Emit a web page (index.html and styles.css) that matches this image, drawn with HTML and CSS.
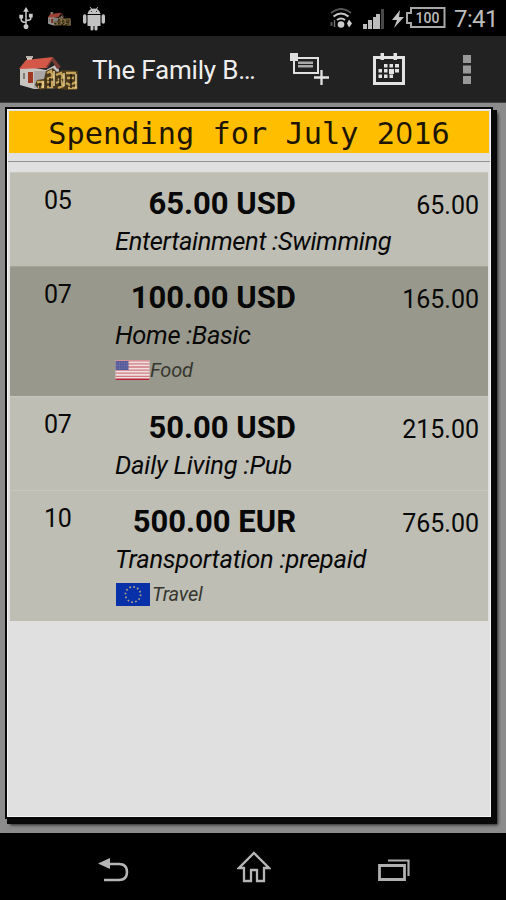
FILE: index.html
```html
<!DOCTYPE html>
<html lang="en">
<head>
<meta charset="utf-8">
<title>The Family Budget</title>
<link rel="stylesheet" href="styles.css">
</head>
<body>
<svg class="defs" width="0" height="0" aria-hidden="true">
  <symbol id="house" viewBox="0 0 62 38">
    <path d="M2 13 11 12 28 15 39 9 42 19 40 33 16 34 2 30Z" fill="#c8c4c0"/>
    <path d="M16 16h24v17H16Z" fill="#aaa6a6"/>
    <path d="M9 9V1h5v8Z" fill="#d8d2cc"/>
    <path d="M8 1h7v2H8Z" fill="#b8afa9"/>
    <path d="M8 5 35 2 29 13 1 14Z" fill="#d45848"/>
    <path d="M35 2 43 12 39 14 34 6 29 14 28 12Z" fill="#783b35"/>
    <path d="M10 17h5v11h-5Z" fill="#9f3822"/>
    <path d="M5 18h2v6H5Z" fill="#817b79"/>
    <path d="M17 30 19 25 26 24 28 16 35 13 39 17 44 15 50 15 60 16 60 34 48 35 34 33 22 35Z" fill="#49381b"/>
    <g fill="none" stroke="#c5a35b" stroke-width="2.4">
      <path d="M19 27h6v5h-5M29 18l4-2 2 6-6 2M29 27h5v5h-5M38 20l5-2 2 4-5 3M38 28l5-2 2 5-5 2M48 18h10M49 23h7M48 28l4 2 6-3M50 33h9"/>
    </g>
    <path d="M25 26v7M36 16v15M46 18v13M58 19v14" stroke="#efd99c" stroke-width="1.4"/>
    <path d="M22 28v5M32 23v9M42 22v9M53 19v14" stroke="#21190e" stroke-width="1.4"/>
  </symbol>
</svg>
<header class="status">
  <svg class="usb" viewBox="0 0 14 24"><path d="M7 3v17M2 10v3q0 3 5 3M12 9v3q0 2-5 2" fill="none" stroke="#c9c9c9" stroke-width="1.6"/><path d="M7 0 10 5H4ZM0 8h4v4H0Zm10-1h4v4h-4Z" fill="#c9c9c9"/><circle cx="7" cy="20.5" r="2.6" fill="#c9c9c9"/></svg>
  <svg class="mini-house"><use href="#house"/></svg>
  <svg class="android" viewBox="0 0 22 24" fill="#c2c2c2"><path d="M4.5 7Q5 3.5 8 2L6.7.3 7.5 0 9 1.8q2-.6 4 0L14.5 0l.8.3L14 2q3 1.5 3.5 5ZM4.500 8h13v11h-3v3a1.500 1.500 0 0 1-3 0v-3h-1v3a1.500 1.500 0 0 1-3 0v-3h-3ZM0 9a1.600 1.600 0 0 1 3.400 0v6A1.600 1.600 0 0 1 0 15Zm18.600 0A1.600 1.600 0 0 1 22 9v6a1.600 1.600 0 0 1-3.400 0Z"/><path d="M8 4h1v1H8Zm5 0h1v1h-1Z" fill="#333"/></svg>
  <span class="spacer"></span>
  <svg class="wifi" viewBox="0 0 22 21" fill="none"><path d="M1 5q10-8 20 0" stroke="#555" stroke-width="2"/><path d="M3.500 8.500q7.500-6 15 0M7 12q4-3 8 0" stroke="#c8c8c8" stroke-width="2"/><circle cx="11" cy="16.500" r="3.300" fill="#ccc"/><path d="M1.500 14v4" stroke="#555" stroke-width="2"/><path d="M4.500 12v7" stroke="#777" stroke-width="1.400"/><path d="m19 11.500 3 4-3 4-2-4Z" fill="#ccc"/></svg>
  <svg class="signal" viewBox="0 0 21 20"><path d="M0 15h4v5H0Zm5-4h4v9H5Zm5-3h3v12h-3Zm3-3h4v15h-4Z" fill="#bcbcbc"/><path d="M18 0h3v20h-3Z" fill="#484848"/></svg>
  <svg class="bolt" viewBox="0 0 12 18"><path d="M8 0 0 10h5L2 18l10-11H7Z" fill="#c4c4c4"/></svg>
  <span class="battery"><svg viewBox="0 0 40 21"><path d="M5 1h33.500v19H5v-4H1V6h4Z" fill="none" stroke="#a8a8a8" stroke-width="2"/></svg><b>100</b></span>
  <span class="clock">7:41</span>
</header>
<nav class="actionbar">
  <svg class="logo"><use href="#house"/></svg>
  <h1>The Family B…</h1>
  <svg class="add" viewBox="0 0 40 34"><path d="M5 5h24v15H5Z" fill="none" stroke="#e1e1e1" stroke-width="2"/><path d="M1 0h8v8H1Z" fill="#dedede"/><path d="M9 8.500h15v2.500H9Zm0 3.500h15v2.500H9Z" fill="#aaa"/><path d="M32.500 17v15M25 24.500h15" stroke="#222" stroke-width="5"/><path d="M32.500 17v15M25 24.500h15" stroke="#e3e3e3" stroke-width="2.300"/></svg>
  <svg class="calendar" viewBox="0 0 32 33"><path d="M1.500 4.500h29v26h-29Z" fill="none" stroke="#e3e3e3" stroke-width="3"/><path d="M7.500 0H11v7H7.500ZM20.500 0H24v7h-3.500Z" fill="#e3e3e3"/><path d="M11 11h3.500v3.500H11Zm5.500 0H20v3.500h-3.500Zm5.500 0h4v3.500h-4ZM5.500 16H9v3.500H5.500Zm5.500 0h3.500v3.500H11Zm5 0h5v5h-5Zm6 0h4v3.500h-4ZM5.500 21.500H9V25H5.500Zm5.500 0h3.500V25H11Zm5.500 0H20V25h-3.500Z" fill="#e3e3e3"/></svg>
  <svg class="more" viewBox="0 0 8 29"><path d="M0 0h8v8H0Zm0 10.500h8v8H0ZM0 21h8v8H0Z" fill="#999"/></svg>
</nav>
<main>
  <section class="paper">
    <h2>Spending for July 2<span>0</span>16</h2>
    <div class="rule"></div>
    <ul>
      <li><span class="day">05</span><div class="entry"><strong>65.00 USD</strong><em class="swim">Entertainment :Swimming</em></div><span class="total">65.00</span></li>
      <li class="dark tall"><span class="day">07</span><div class="entry"><strong>100.00 USD</strong><em class="basic">Home :Basic</em><div class="tag"><svg class="us" viewBox="0 0 34 20"><path d="M0 0h34v20H0Z" fill="#eee1df"/><path d="M0 .8h34M0 3.900h34M0 7h34M0 10.100h34M0 13.200h34M0 16.300h34" stroke="#d07a80" stroke-width="1.300"/><path d="M0 18.500h34V20H0Z" fill="#b52035"/><path d="M0 1h13v9H0Z" fill="#565b99"/><path d="M1 3h11M1 5.500h11M1 8h11" stroke="#8589b5" stroke-dasharray="1 1.500"/></svg><i>Food</i></div></div><span class="total">165.00</span></li>
      <li><span class="day">07</span><div class="entry"><strong>50.00 USD</strong><em class="pub">Daily Living :Pub</em></div><span class="total">215.00</span></li>
      <li class="tall"><span class="day">10</span><div class="entry"><strong>500.00 EUR</strong><em class="prepaid">Transportation :prepaid</em><div class="tag eur"><svg class="eu" viewBox="0 0 34 23"><path d="M0 0h34v23H0Z" fill="#0830a8"/><circle cx="17" cy="11.500" r="7.600" fill="none" stroke="#b2a486" stroke-width="1.700" stroke-dasharray="1.700 2.280"/></svg><i>Travel</i></div></div><span class="total">765.00</span></li>
    </ul>
  </section>
</main>
<footer>
  <svg class="back" viewBox="0 0 32 24"><path d="M10 6h11q8 0 8 8t-8 8H6" fill="none" stroke="#b5b5b5" stroke-width="2.600"/><path d="M0 5.500 12 0v11Z" fill="#b5b5b5"/></svg>
  <svg class="home" viewBox="0 0 34 32"><path d="M17 2 32 17h-5v13h-7V19h-6v11H7V17H2Z" fill="none" stroke="#b5b5b5" stroke-width="2.300"/></svg>
  <svg class="recent" viewBox="0 0 32 23"><path d="M1.500 6.500h25v14h-25Z" fill="none" stroke="#b0b0b0" stroke-width="2.800"/><path d="M10 1.500h20.500V17" fill="none" stroke="#aaa" stroke-width="2.200"/></svg>
</footer>
</body>
</html>
```
FILE: styles.css
```css
* { box-sizing: border-box; }
body { margin: 0; width: 506px; height: 900px; overflow: hidden; background: #000; font-family: Roboto, "Liberation Sans", sans-serif; }
svg { display: block; flex: none; }
.defs { position: absolute; }
h1, h2, ul { margin: 0; padding: 0; font-weight: 400; }
.status { height: 36px; display: flex; align-items: flex-start; padding: 7px 9px 0 19px; color: #bdbdbd; }
.usb { width: 14px; height: 23px; }
.mini-house { width: 25px; height: 15px; margin: 5px 0 0 14px; opacity: .75; }
.android { width: 22px; height: 24px; margin-left: 11px; }
.spacer { flex: 1; }
.wifi { width: 22px; height: 21px; margin: 1px 11px 0 0; }
.signal { width: 21px; height: 20px; margin: 2px 8px 0 0; }
.bolt { width: 12px; height: 18px; margin: 3px 2px 0 0; }
.battery { width: 40px; height: 21px; display: grid; }
.battery svg, .battery b { grid-area: 1 / 1; }
.battery svg { width: 40px; height: 21px; }
.battery b { font-size: 14px; line-height: 22px; text-align: center; padding-left: 3px; font-weight: 500; }
.clock { font-size: 24px; line-height: 24px; width: 43px; margin-left: 8px; white-space: nowrap; letter-spacing: -.6px; }
.actionbar { height: 66px; display: flex; align-items: flex-start; background: #222; padding-left: 18px; color: #eee; }
.logo { width: 62px; height: 38px; margin-top: 19px; }
h1 { width: 175px; margin: 19px 0 0 12px; font-size: 26px; line-height: 30px; letter-spacing: -.2px; white-space: nowrap; }
.add { width: 40px; height: 34px; margin: 17px 0 0 22px; }
.calendar { width: 32px; height: 33px; margin: 17px 0 0 44px; }
.more { width: 8px; height: 29px; margin: 19px 0 0 58px; }
main { height: 731px; background: #8c8c8c; border-top: 1px solid #444; padding: 6px 0 0 7px; }
.paper { width: 484px; height: 708px; background: #e0e0e0; border: 1px solid #f3f3f3; outline: 2px solid #080808; box-shadow: 3px 4px 0 3px #080808, 5px 6px 3px 2px #222; }
h2 { height: 42px; margin: 1px 1px 0; background: #ffbf00; color: #1d1500; font: 30.3px/45px "DejaVu Sans Mono", monospace; text-align: center; white-space: nowrap; }
h2 span { display: inline-block; width: .602em; line-height: 1; font-family: "Open Sans", sans-serif; }
.rule { height: 9px; border-bottom: 1px solid #929292; }
ul { list-style: none; margin: 10px 2px 0; }
li { height: 94px; display: grid; grid-template-columns: 105px 180px 1fr; background: #bebeb5; border-top: 1px solid #c8c8c1; color: #080808; }
li.tall { height: 131px; }
li.dark { height: 130px; background: #98998c; border-color: #a3a397; }
.day { padding: 13px 0 0 34px; font-size: 25px; line-height: 30px; letter-spacing: -.2px; }
.entry { width: 300px; }
strong { display: block; width: 181px; padding-top: 13px; text-align: right; font-size: 31px; line-height: 36px; font-weight: 700; white-space: nowrap; }
em { display: block; margin-top: 3px; font-size: 25.5px; line-height: 32px; letter-spacing: -.35px; white-space: nowrap; }
.prepaid { letter-spacing: -.25px; }
.pub { letter-spacing: -.18px; }
.tag { display: flex; align-items: center; height: 26px; margin-top: 6px; font-size: 20px; line-height: 26px; letter-spacing: -.2px; color: #36362f; }
.us { width: 35px; height: 20px; }
.eu { width: 34px; height: 23px; }
.eur { padding-left: 1px; gap: 2px; }
.total { padding: 17px 9px 0 0; text-align: right; font-size: 25px; line-height: 32px; }
footer { height: 67px; display: flex; align-items: flex-start; padding-left: 98px; background: #000; }
.back { width: 32px; height: 24px; margin-top: 25px; }
.home { width: 34px; height: 32px; margin: 18px 0 0 107px; }
.recent { width: 32px; height: 23px; margin: 26px 0 0 107px; }
```
